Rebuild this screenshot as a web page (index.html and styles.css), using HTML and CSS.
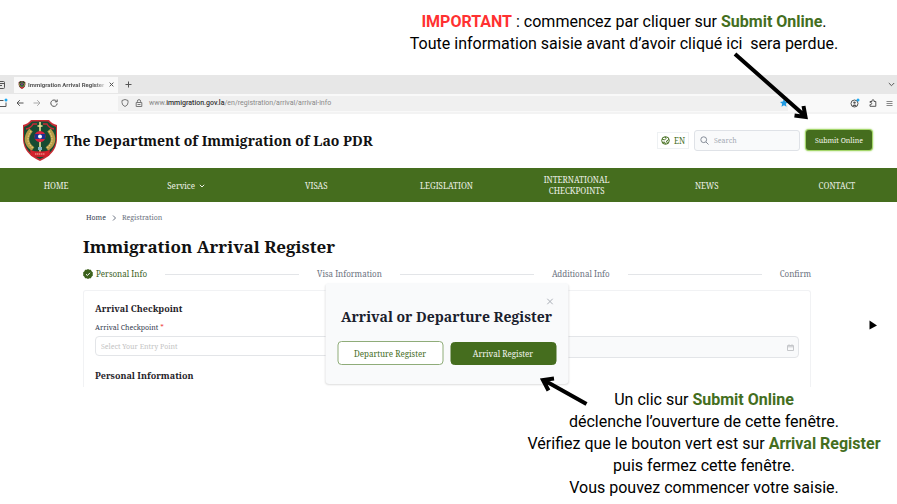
FILE: index.html
```html
<!DOCTYPE html>
<html lang="fr">
<head>
<meta charset="utf-8">
<meta name="viewport" content="width=device-width, initial-scale=1">
<title>Immigration Arrival Register</title>
<link rel="stylesheet" href="styles.css">
</head>
<body>
<p class="note note-top"><strong class="alert">IMPORTANT</strong> : commencez par cliquer sur <strong>Submit Online</strong>.<br>Toute information saisie avant d’avoir cliqué ici&nbsp; sera perdue.</p>

<div class="browser">
  <div class="tabs">
    <svg class="tab-edge" viewBox="0 0 6 10"><path d="M0 1.500h3.500q1 0 1 1v5q0 1-1 1H0M0 3.500h4.500M0 5.500h2"/></svg>
    <div class="tab">
      <svg class="favicon" viewBox="0 0 34 41"><use href="#emblem"/></svg>
      <span class="tab-title">Immigration Arrival Register</span>
      <button class="plain" aria-label="Fermer l’onglet"><svg class="i5" viewBox="0 0 5 5"><path d="M.6.6l3.800 3.800M4.400.6L.6 4.400"/></svg></button>
    </div>
    <button class="plain tab-new" aria-label="Nouvel onglet"><svg class="i7" viewBox="0 0 7 7"><path d="M3.500.5v6M.5 3.500h6"/></svg></button>
    <button class="plain tab-list" aria-label="Liste des onglets"><svg class="i7" viewBox="0 0 7 7"><path d="M.8 2l2.700 2.700L6.200 2"/></svg></button>
  </div>
  <div class="toolbar">
    <svg class="side-icon" viewBox="0 0 8 10"><path d="M0 2.500h3.500M6 4.500v4H0"/><circle cx="6" cy="2" r="1.500"/></svg>
    <button class="plain" aria-label="Précédent"><svg class="i8" viewBox="0 0 8 8"><path d="M7.500 4H1M3.800 1.200L1 4l2.800 2.800"/></svg></button>
    <button class="plain faded" aria-label="Suivant"><svg class="i8" viewBox="0 0 8 8"><path d="M.5 4H7M4.200 1.200L7 4 4.200 6.800"/></svg></button>
    <button class="plain" aria-label="Actualiser"><svg class="i8" viewBox="0 0 8 8"><path d="M6.600 2.300A3.200 3.200 0 1 0 7.200 4.500M7.200.5v2.300H4.900"/></svg></button>
    <div class="address">
      <svg class="i8" viewBox="0 0 8 8"><path d="M4 .5l3 1v2.200Q7 6.300 4 7.500 1 6.300 1 3.700V1.500z"/></svg>
      <svg class="i8" viewBox="0 0 8 8"><path d="M1.200 3.500h5.600v4H1.200zM2.400 3.500V2.200a1.600 1.600 0 0 1 3.200 0v1.300M2.500 5.500h3"/></svg>
      <span class="url">www.<b>immigration.gov.la</b>/en/registration/arrival/arrival-info</span>
      <svg class="i8 star" viewBox="0 0 8 8"><path d="M4 0l1.200 2.600 2.800.3-2.100 1.900.6 2.900L4 6.200 1.500 7.700l.6-2.900L0 2.900l2.800-.3z"/></svg>
    </div>
    <svg class="i10" viewBox="0 0 10 10"><circle cx="4.500" cy="5.500" r="3.500"/><circle class="fill" cx="4.500" cy="4.600" r="1.200"/><path class="fill" d="M2.300 7.500q2.200-2 4.400 0-2.200 1.600-4.400 0z"/><circle class="dot" cx="8" cy="2" r="1.500"/></svg>
    <svg class="i8" viewBox="0 0 8 8"><path d="M1 7.300V5.500h.7a1 1 0 0 0 0-2H1V2.500h2V1.700a1 1 0 0 1 2 0v.8h1.800v4.800z"/></svg>
    <svg class="i7 menu" viewBox="0 0 7 7"><path d="M.5 1.500h6M.5 3.500h6M.5 5.500h6"/></svg>
  </div>

  <header class="site-head">
    <svg class="crest" viewBox="0 0 34 41" role="img" aria-label="Emblème">
      <g id="emblem">
        <path fill="#c92c35" d="M0 5Q5 4 8 0h18q3 4 8 5v15q-1 14-17 21Q1 34 0 20z"/>
        <path fill="#164b32" d="M1 7Q6 5 9 1.500h16q3 3.500 8 5.500V20q-1 12-16 19Q2 32 1 20z"/>
        <path fill="none" stroke="#c92c35" stroke-width="1.500" d="M3 9q5-1 7-5h4M31 9q-5-1-7-5h-4"/>
        <path fill="none" stroke="#b69b48" stroke-width="4.500" d="M8 10Q-1 21 10 29M26 10q9 11-2 19"/>
        <path fill="none" stroke="#dfcb7c" stroke-width="1.200" stroke-dasharray="1.500 1" d="M8 11Q1 21 10 28M26 11q7 10-2 17"/>
        <path stroke="#efe296" stroke-width="1.600" d="M17 2v31M14.500 6h5"/>
        <circle cx="17" cy="16.500" r="5.500" fill="#d7213f"/>
        <path fill="#1c2f91" d="M11.800 14h10.400v5H11.800z"/>
        <circle cx="17" cy="16.500" r="2" fill="#fff"/>
        <path fill="#82b2c3" d="M15 27h4v3h-4z"/>
        <path fill="#d3212c" d="M7 30q10 3 20 0l-1 6q-9 2-18 0z"/>
        <path stroke="#f3b7a5" stroke-width="1.200" stroke-dasharray="1.500 .5" d="M12 34h10"/>
      </g>
    </svg>
    <p class="site-name">The Department of Immigration of Lao PDR</p>
    <button class="lang"><svg class="i9" viewBox="0 0 9 9"><circle cx="4.500" cy="4.500" r="3.800"/><path d="M1 3l2.500 1L5 2.500 4 .8M8 3.500L5.500 5l1 2.500M1.500 6.500l2-.5 1 2"/></svg>EN</button>
    <label class="search"><svg class="i9" viewBox="0 0 9 9"><circle cx="3.700" cy="3.700" r="2.900"/><path d="M6 6l2.500 2.500"/></svg><input type="search" placeholder="Search" aria-label="Search"></label>
    <button class="submit">Submit Online</button>
  </header>

  <nav class="site-nav">
    <div class="nav-grid">
      <a href="#">HOME</a>
      <a href="#">Service <svg class="i6" viewBox="0 0 6 6"><path d="M.8 1.800L3 4l2.200-2.200"/></svg></a>
      <a href="#">VISAS</a>
      <a href="#">LEGISLATION</a>
      <a href="#">INTERNATIONAL<br>CHECKPOINTS</a>
      <a href="#">NEWS</a>
      <a href="#">CONTACT</a>
    </div>
  </nav>

  <main>
    <div class="crumbs"><a href="#">Home</a><svg class="i6" viewBox="0 0 6 6"><path d="M2 .5L4.500 3 2 5.500"/></svg><span>Registration</span></div>
    <h1>Immigration Arrival Register</h1>
    <div class="steps">
      <span class="step active"><svg class="check" viewBox="0 0 10 10"><path class="seal" d="M5 0l1.400.7 1.500.1.700 1.400L9.900 3.500 9.700 5l.2 1.500-1.300 1.300-.7 1.400-1.500.1L5 10l-1.400-.7-1.500-.1-.7-1.400L.1 6.500.3 5 .1 3.500l1.300-1.300.7-1.400L3.600.7z"/><path class="tick" d="M3 5.200l1.400 1.300L7 3.800"/></svg>Personal Info</span>
      <i></i><span>Visa Information</span>
      <i></i><span>Additional Info</span>
      <i></i><span>Confirm</span>
    </div>
    <form class="card">
      <h2>Arrival Checkpoint</h2>
      <label class="field-label" for="entry">Arrival Checkpoint <em>*</em></label>
      <div class="fields">
        <input id="entry" class="field" type="text" placeholder="Select Your Entry Point">
        <div class="date-field">
          <input type="text" aria-label="Date">
          <svg class="i7" viewBox="0 0 7 7"><path d="M.5 1.500h6v5h-6zM.5 2.800h6M2 .3v1.200M5 .3v1.200"/></svg>
        </div>
      </div>
      <h2>Personal Information</h2>
    </form>
  </main>

  <div class="modal" role="dialog" aria-labelledby="modal-title">
    <button class="plain close" aria-label="Fermer"><svg class="i7" viewBox="0 0 7 7"><path d="M.7.7l5.600 5.600M6.300.7L.7 6.300"/></svg></button>
    <h2 id="modal-title">Arrival or Departure Register</h2>
    <div class="choices">
      <button class="choice">Departure Register</button>
      <button class="choice chosen">Arrival Register</button>
    </div>
  </div>
</div>

<p class="note note-bottom">Un clic sur <strong>Submit Online</strong><br>déclenche l’ouverture de cette fenêtre.<br>Vérifiez que le bouton vert est sur <strong>Arrival Register</strong><br>puis fermez cette fenêtre.<br>Vous pouvez commencer votre saisie.</p>

<svg class="overlay" viewBox="0 0 897 504" aria-hidden="true">
  <path class="arrow" d="M735 54l69 61M794.500 115.500l11 1.500-2-11"/>
  <path class="arrow" d="M586.500 404l-42-23.500M554 378.500l-11 1.500 5.500 10.500"/>
  <path d="M869.500 320.500l7.500 5-7.500 4z" fill="#000"/>
</svg>
</body>
</html>
```
FILE: styles.css
```css
* { box-sizing: border-box; }
body {
  margin: 0;
  position: relative;
  background: #fff;
  color: #111;
  font-family: "Noto Serif", "DejaVu Serif Condensed", "DejaVu Serif", serif;
}
h1, h2, p { margin: 0; }
a { color: inherit; text-decoration: none; }
button, input { font: inherit; color: inherit; }
button { padding: 0; }
svg { flex: none; fill: none; stroke: currentColor; stroke-width: 1; }
.plain { display: flex; border: 0; background: none; }
.i5 { width: 5px; height: 5px; }
.i6 { width: 6px; height: 6px; }
.i7 { width: 7px; height: 7px; }
.i8 { width: 8px; height: 8px; }
.i9 { width: 9px; height: 9px; }
.i10 { width: 10px; height: 10px; }

.note {
  font-family: Roboto, sans-serif;
  font-size: 16px;
  line-height: 22px;
  text-align: center;
  color: #000;
}
.note strong { color: #446e1e; }
.note strong.alert { color: #ff3131; }
.note-top { padding: 11px 0 20px 351px; }
.note-bottom { padding: 2px 0 0 511px; }

.browser { position: relative; }
.tabs, .toolbar { font-family: Roboto, "Noto Sans", sans-serif; color: #555; }
.tabs { display: flex; align-items: center; height: 19px; background: #e7e7e7; }
.tab-edge { width: 6px; height: 10px; margin-right: 8px; }
.tab {
  display: flex;
  align-items: center;
  gap: 2px;
  width: 104px;
  height: 16px;
  padding: 0 4px;
  background: #f9f9f9;
}
.favicon { width: 8px; height: 8px; stroke: none; }
.tab-title {
  flex: 1;
  white-space: nowrap;
  font-size: 6px;
  font-weight: 700;
  mask-image: linear-gradient(90deg, #000 85%, transparent);
}
.tab-new { margin-left: 7px; }
.tab-list { margin: 0 2px 0 auto; }

.toolbar {
  display: flex;
  align-items: center;
  gap: 9px;
  height: 20px;
  padding-right: 4px;
  background: #f9f9f9;
  border-bottom: 2px solid #f3f3f3;
}
.side-icon { width: 8px; height: 10px; margin-right: -1px; }
.side-icon circle, .dot { fill: #1fa8ef; stroke: none; }
.faded { color: #aaa; }
.menu { color: #888; }
.address {
  display: flex;
  flex: 1;
  align-items: center;
  gap: 6px;
  height: 15px;
  margin: 0 53px 0 51px;
  padding: 0 0 0 3px;
  background: #f0f0f0;
}
.address > svg { color: #777; }
.url { flex: 1; font-size: 7px; color: #888; }
.url b { color: #333; font-weight: 500; }
.address > .star { fill: #209be3; stroke: none; }
.fill { fill: currentColor; stroke: none; }

.site-head {
  display: flex;
  align-items: center;
  height: 54px;
  padding: 0 25px 2px 23px;
}
.crest { width: 34px; height: 41px; stroke: none; }
.site-name { flex: 1; margin-left: 7px; font-size: 14px; font-weight: 700; white-space: nowrap; }
.lang {
  display: flex;
  align-items: center;
  justify-content: center;
  gap: 4px;
  width: 32px;
  height: 17px;
  border: 1px solid #eef1f3;
  background: #fff;
  color: #446e1e;
  font-size: 8px;
}
.search {
  display: flex;
  align-items: center;
  gap: 5px;
  width: 106px;
  height: 21px;
  margin: 0 6px 0 5px;
  padding: 0 5px;
  border: 1px solid #dfe2e7;
  border-radius: 3px;
  background: #f9fafb;
  color: #858c97;
}
.search input { width: 100%; padding: 0; border: 0; outline: 0; background: none; font-size: 7px; }
input::placeholder { color: #a5abb4; opacity: 1; }
.submit {
  width: 66px;
  height: 20px;
  border: 0;
  border-radius: 3px;
  background: #456d1e;
  box-shadow: 0 0 0 1px #a4d66b, 0 0 2px 1px #a4d66b;
  color: #f5f7ed;
  font-size: 7px;
}

.site-nav {
  overflow: hidden;
  background: #456d1e;
  color: #edf1e8;
  font-size: 8px;
  line-height: 11px;
}
.nav-grid {
  display: grid;
  grid-template-columns: repeat(7, 1fr);
  align-items: center;
  height: 34px;
  margin: 0 -5px 0 -9px;
  text-align: center;
}
.nav-grid svg { margin-left: 2px; }

main { padding: 11px 86px 0 83px; }
.crumbs { display: flex; align-items: center; gap: 5px; padding-left: 3px; font-size: 7px; line-height: 10px; color: #6b7280; }
.crumbs a { color: #374151; }
h1 { margin-top: 12px; font-size: 17px; line-height: 24px; }
.steps { display: flex; align-items: center; gap: 18px; margin-top: 9px; font-size: 8px; line-height: 12px; color: #6b7280; }
.steps i { flex: 1; height: 1px; background: #e3e5e8; }
.step { display: flex; align-items: center; gap: 3px; }
.active { color: #3c611c; }
.check { width: 10px; height: 10px; }
.seal { fill: #3c611c; stroke: none; }
.tick { stroke: #fff; }
.card {
  height: 97px;
  margin-top: 10px;
  padding: 11px 11px 0;
  border: 1px solid #f1f2f4;
  border-bottom: 0;
  border-radius: 3px 3px 0 0;
}
.card h2 { font-size: 9px; line-height: 14px; color: #1f2329; }
.field-label { display: block; margin: 7px 0 3px; font-size: 7px; line-height: 10px; color: #374151; }
.field-label em { color: #e33; font-style: normal; }
.fields { display: grid; grid-template-columns: 1fr 1fr; gap: 12px; align-items: start; margin-bottom: 11px; }
.field, .date-field { border: 1px solid #e3e5e8; border-radius: 4px; }
.field { width: 100%; height: 20px; padding: 0 5px; background: #fff; font-size: 7px; }
.field::placeholder { color: #c4c4c4; }
.date-field { display: flex; align-items: center; height: 22px; padding: 0 4px; background: #f9fafb; color: #c5c7ca; }
.date-field input { flex: 1; min-width: 0; border: 0; outline: 0; background: none; font-size: 7px; }

.modal {
  position: absolute;
  bottom: 3px;
  left: calc(50% - 2px);
  width: 243px;
  padding: 15px 12px 19px;
  border-radius: 4px;
  background: #f9fafb;
  box-shadow: 0 1px 2px #0002;
  transform: translateX(-50%);
}
.close { margin: 0 3px 0 auto; color: #a9aeb6; }
.modal h2 { font-size: 14px; line-height: 24px; color: #1a202c; text-align: center; white-space: nowrap; }
.choices { display: grid; grid-template-columns: 1fr 1fr; gap: 7px; align-items: center; margin-top: 12px; }
.choice { height: 24px; border: 1px solid #8fac79; border-radius: 4px; background: #fff; color: #456d1e; font-size: 8px; }
.chosen { height: 23px; border-color: #456d1e; background: #456d1e; color: #f2f5ef; }

.overlay { position: absolute; top: 0; left: 0; width: 897px; height: 504px; stroke: none; pointer-events: none; }
.arrow { stroke: #000; stroke-width: 4; }
```
